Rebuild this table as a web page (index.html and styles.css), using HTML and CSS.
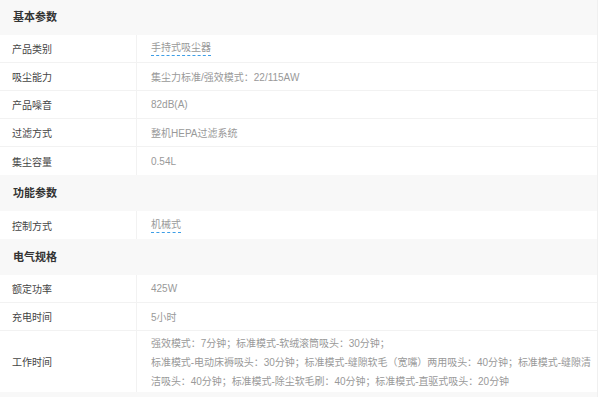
FILE: index.html
```html
<!DOCTYPE html>
<html lang="zh-CN">
<head>
    <meta charset="UTF-8">
    <title>规格参数</title>
    <link rel="stylesheet" href="styles.css">
</head>
<body>
    <div class="spec">
        <div class="group-title">基本参数</div>
        <div class="row">
            <div class="name">产品类别</div>
            <div class="value"><span class="link">手持式吸尘器</span></div>
        </div>
        <div class="row">
            <div class="name">吸尘能力</div>
            <div class="value">集尘力标准/强效模式：22/115AW</div>
        </div>
        <div class="row">
            <div class="name">产品噪音</div>
            <div class="value">82dB(A)</div>
        </div>
        <div class="row">
            <div class="name">过滤方式</div>
            <div class="value">整机HEPA过滤系统</div>
        </div>
        <div class="row">
            <div class="name">集尘容量</div>
            <div class="value">0.54L</div>
        </div>

        <div class="group-title">功能参数</div>
        <div class="row">
            <div class="name">控制方式</div>
            <div class="value"><span class="link">机械式</span></div>
        </div>

        <div class="group-title">电气规格</div>
        <div class="row">
            <div class="name">额定功率</div>
            <div class="value">425W</div>
        </div>
        <div class="row">
            <div class="name">充电时间</div>
            <div class="value">5小时</div>
        </div>
        <div class="row tall">
            <div class="name">工作时间</div>
            <div class="value">强效模式：7分钟；标准模式-软绒滚筒吸头：30分钟；<br>标准模式-电动床褥吸头：30分钟；标准模式-缝隙软毛（宽嘴）两用吸头：40分钟；标准模式-缝隙清洁吸头：40分钟；标准模式-除尘软毛刷：40分钟；标准模式-直驱式吸头：20分钟</div>
        </div>
        <div class="group-title tail"></div>
    </div>
</body>
</html>
```

FILE: styles.css
```css
body {
    margin: 0;
    padding: 0;
    background-color: #fff;
    font-family: "Liberation Sans", "Noto Sans CJK SC", sans-serif;
    overflow: hidden;
}
.spec {
    width: 597px;
    border-right: 1px solid #f0f0f0;
}
.group-title {
    height: 36px;
    line-height: 36px;
    padding-left: 13px;
    background-color: #f8f8f8;
    font-size: 11px;
    font-weight: bold;
    color: #333;
}
.group-title:first-child {
    height: 35px;
    line-height: 35px;
}
.group-title.tail {
    height: 5px;
}
.row {
    display: flex;
    height: 27px;
    border-bottom: 1px solid #f2f2f2;
    font-size: 10px;
}
.row:has(+ .group-title) {
    border-bottom: none;
    height: 28px;
}
.name {
    width: 124px;
    padding-left: 12px;
    border-right: 1px solid #f2f2f2;
    color: #444;
    display: flex;
    align-items: center;
}
.value {
    flex: 1;
    padding: 0 0 0 14px;
    color: #999;
    display: flex;
    align-items: center;
}
.link {
    border-bottom: 1px dashed #3d9ee6;
    line-height: 14px;
}
.row.tall {
    height: 61px;
}
.tall .value {
    display: block;
    padding-top: 3px;
    line-height: 19px;
    letter-spacing: -0.05px;
}
```
